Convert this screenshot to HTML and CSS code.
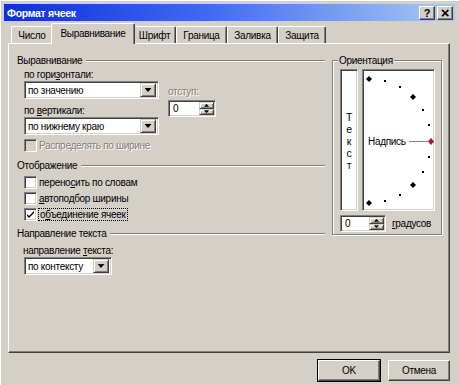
FILE: index.html
```html
<!DOCTYPE html>
<html lang="ru">
<head>
  <meta charset="UTF-8">
  <meta name="viewport" content="width=device-width, initial-scale=1.0">
  <title>Формат ячеек</title>
  <link rel="stylesheet" href="styles.css">
</head>
<body>
  <div class="window">
    <div class="titlebar">
      <span class="title">Формат ячеек</span>
      <div class="caption-btns">
        <span class="cbtn">?</span>
        <span class="cbtn close">×</span>
      </div>
    </div>

    <div class="tabs">
      <div class="tab t-num">Число</div>
      <div class="tab active">Выравнивание</div>
      <div class="tab t-font">Шрифт</div>
      <div class="tab t-border">Граница</div>
      <div class="tab t-fill">Заливка</div>
      <div class="tab t-prot">Защита</div>
    </div>

    <div class="panel">
      <div class="left">
        <div class="group-title">Выравнивание</div>
        <div class="align-row">
          <div class="align-col">
            <div class="lbl">по гори<u>з</u>онтали:</div>
            <div class="combo wide"><span class="val">по значению</span><span class="drop"></span></div>
            <div class="lbl gap">по <u>в</u>ертикали:</div>
            <div class="combo wide"><span class="val">по нижнему краю</span><span class="drop"></span></div>
          </div>
          <div class="indent-col">
            <div class="lbl disabled">отступ:</div>
            <div class="spin indent"><span class="val">0</span><span class="spin-btns"><span class="up"></span><span class="down"></span></span></div>
          </div>
        </div>
        <div class="check disabled first"><span class="box"></span><span>Распределять по ширине</span></div>

        <div class="group-title g2">Отображение</div>
        <div class="checks">
          <div class="check"><span class="box"></span><span>перено<u>с</u>ить по словам</span></div>
          <div class="check"><span class="box"></span><span><u>а</u>втоподбор ширины</span></div>
          <div class="check"><span class="box checked"></span><span class="focus">о<u>б</u>ъединение ячеек</span></div>
        </div>

        <div class="group-title g3">Направление текста</div>
        <div class="lbl dir">направление <u>т</u>екста:</div>
        <div class="combo narrow"><span class="val">по контексту</span><span class="drop"></span></div>
      </div>

      <fieldset class="orient">
        <legend>Ориентация</legend>
        <div class="orient-boxes">
          <div class="vtext"><span>Т</span><span>е</span><span>к</span><span>с</span><span>т</span></div>
          <div class="dial">
            <svg width="69" height="138" viewBox="0 0 69 138">
              <g fill="#000">
                <path d="M4 4l3 3-3 3-3-3z"/>
                <rect x="19" y="8" width="2" height="2"/>
                <rect x="34" y="14" width="2" height="2"/>
                <path d="M48 22l3 3-3 3-3-3z"/>
                <rect x="57" y="37" width="2" height="2"/>
                <rect x="63" y="52" width="2" height="2"/>
                <rect x="63" y="84" width="2" height="2"/>
                <rect x="57" y="99" width="2" height="2"/>
                <path d="M48 110l3 3-3 3-3-3z"/>
                <rect x="34" y="122" width="2" height="2"/>
                <rect x="19" y="128" width="2" height="2"/>
                <path d="M4 128l3 3-3 3-3-3z"/>
              </g>
              <line x1="44" y1="69.5" x2="63" y2="69.5" stroke="#808080" stroke-width="1"/>
              <path d="M66 66l3 3.5-3 3.5-3-3.5z" fill="#b0103a"/>
              <text x="3" y="73" class="dial-text">Надпись</text>
            </svg>
          </div>
        </div>
        <div class="deg-row">
          <div class="spin deg"><span class="val">0</span><span class="spin-btns"><span class="up"></span><span class="down"></span></span></div>
          <span class="deg-lbl"><u>г</u>радусов</span>
        </div>
      </fieldset>
    </div>

    <div class="buttons">
      <div class="btn default">OK</div>
      <div class="btn">Отмена</div>
    </div>
  </div>
</body>
</html>
```

FILE: styles.css
```css
* {
  box-sizing: border-box;
}
body {
  margin: 0;
  width: 459px;
  height: 385px;
  overflow: hidden;
  background: #d4d0c8;
  font: 10px "Liberation Sans", Arial, sans-serif;
  letter-spacing: -0.3px;
  color: #000;
}
u {
  text-decoration: underline;
  text-underline-offset: 1px;
}

.window {
  height: 385px;
  padding: 4px 4px 0 4px;
  background: #d4d0c8;
  box-shadow: inset 1px 1px #fff;
}

/* title bar */
.titlebar {
  height: 17px;
  display: flex;
  align-items: center;
  justify-content: space-between;
  padding: 0 2px 0 3px;
  background: linear-gradient(to right, #0c2fd8, #3f6af0 45%, #a9cbf2);
  color: #fff;
  font-size: 10.5px;
  font-weight: bold;
}
.caption-btns {
  display: flex;
  gap: 2px;
}
.cbtn {
  width: 16px;
  height: 14px;
  display: flex;
  align-items: center;
  justify-content: center;
  background: #d4d0c8;
  color: #000;
  font: bold 11px "Liberation Sans", Arial, sans-serif;
  border: 1px solid;
  border-color: #fff #404040 #404040 #fff;
  box-shadow: inset -1px -1px #808080;
}
.cbtn.close {
  font-size: 15px;
  line-height: 12px;
}

/* tabs */
.tabs {
  display: flex;
  align-items: flex-end;
  height: 22px;
  padding-left: 7px;
  position: relative;
  z-index: 1;
}
.tab {
  height: 17px;
  display: flex;
  align-items: center;
  justify-content: center;
  border-left: 1px solid #fff;
  border-top: 1px solid #fff;
  border-right: 1px solid #404040;
  border-radius: 2px 2px 0 0;
  box-shadow: inset -1px 0 #808080;
  background: #d4d0c8;
}
.t-num { width: 42px; }
.t-font { width: 43px; }
.t-border { width: 51px; }
.t-fill { width: 51px; }
.t-prot { width: 48px; }
.tab.active {
  width: 84px;
  height: 21px;
  margin: 0 -2px -1px;
  padding-bottom: 2px;
  position: relative;
}

/* panel */
.panel {
  height: 310px;
  margin: 0 5px 0 4px;
  display: grid;
  grid-template-columns: 308px 110px;
  column-gap: 7px;
  align-items: start;
  padding: 10px 0 0 8px;
  border: 1px solid;
  border-color: #fff #404040 #404040 #fff;
  box-shadow: inset -1px -1px #808080;
}

.group-title {
  display: flex;
  align-items: center;
  gap: 4px;
  height: 13px;
}
.group-title::after {
  content: "";
  flex: 1;
  border-top: 1px solid #808080;
  border-bottom: 1px solid #fff;
}
.g2 { margin-top: 6px; }
.g3 { margin-top: 5px; }

.lbl {
  height: 12px;
  line-height: 12px;
  white-space: nowrap;
}
.disabled {
  color: #808080;
  text-shadow: 1px 1px #fff;
}

.align-row {
  display: flex;
  gap: 9px;
  padding-left: 7px;
  margin-top: 2px;
}
.align-col .gap {
  margin-top: 6px;
}
.indent-col {
  padding-top: 17px;
}
.indent-col .spin {
  margin-top: 2px;
}

/* combo boxes */
.combo {
  height: 18px;
  display: flex;
  align-items: center;
  justify-content: space-between;
  white-space: nowrap;
  background: #fff;
  border: 1px solid;
  border-color: #808080 #fff #fff #808080;
  box-shadow: inset 1px 1px #404040, inset -1px -1px #d4d0c8;
  padding: 2px 2px 2px 3px;
}
.combo.wide { width: 135px; }
.combo.narrow { width: 88px; margin-left: 7px; }
.drop {
  width: 16px;
  height: 14px;
  flex: none;
  display: flex;
  align-items: center;
  justify-content: center;
  background: #d4d0c8;
  border: 1px solid;
  border-color: #d4d0c8 #404040 #404040 #d4d0c8;
  box-shadow: inset 1px 1px #fff, inset -1px -1px #808080;
}
.drop::after {
  content: "";
  width: 7px;
  height: 4px;
  background: #000;
  clip-path: polygon(0 0, 100% 0, 50% 100%);
}

/* spinners */
.spin {
  height: 17px;
  display: flex;
  align-items: center;
  justify-content: space-between;
  background: #fff;
  border: 1px solid;
  border-color: #808080 #fff #fff #808080;
  box-shadow: inset 1px 1px #404040, inset -1px -1px #d4d0c8;
  padding: 1px 1px 1px 4px;
}
.spin.indent { width: 48px; }
.spin.deg { width: 46px; }
.spin-btns {
  display: flex;
  flex-direction: column;
  width: 15px;
  height: 13px;
}
.spin-btns span {
  flex: 1;
  display: flex;
  align-items: center;
  justify-content: center;
  background: #d4d0c8;
  border: 1px solid;
  border-color: #d4d0c8 #404040 #404040 #d4d0c8;
  box-shadow: inset 1px 1px #fff, inset -1px -1px #808080;
}
.spin-btns span::after {
  content: "";
  width: 5px;
  height: 3px;
  background: #000;
}
.spin-btns .up::after {
  clip-path: polygon(50% 0, 100% 100%, 0 100%);
}
.spin-btns .down::after {
  clip-path: polygon(0 0, 100% 0, 50% 100%);
}

/* checkboxes */
.check {
  display: flex;
  align-items: center;
  gap: 2px;
  height: 15px;
  padding-left: 7px;
  white-space: nowrap;
}
.check.first {
  margin-top: 3px;
}
.checks {
  display: flex;
  flex-direction: column;
  gap: 1px;
  margin-top: 3px;
}
.box {
  width: 13px;
  height: 13px;
  flex: none;
  background: #fff;
  border: 1px solid;
  border-color: #808080 #fff #fff #808080;
  box-shadow: inset 1px 1px #404040, inset -1px -1px #d4d0c8;
  position: relative;
}
.check.disabled .box {
  background: #d4d0c8;
}
.box.checked::after {
  content: "";
  position: absolute;
  left: 2px;
  top: 2px;
  width: 7px;
  height: 7px;
  background: #000;
  clip-path: polygon(0 43%, 0 71%, 29% 100%, 100% 29%, 100% 0, 29% 71%);
}
.focus {
  outline: 1px dotted #000;
  outline-offset: 0;
  padding: 0 1px;
}

.dir {
  margin-top: 4px;
  padding-left: 6px;
  height: 13px;
  line-height: 13px;
}

/* orientation */
.orient {
  margin: 0;
  min-width: 0;
  height: 181px;
  padding: 2px 6px 0 7px;
  border: 1px solid #808080;
  box-shadow: inset 1px 1px #fff, 1px 1px #fff;
}
.orient legend {
  padding: 0 1px;
  margin-left: -2px;
  line-height: 13px;
  background: #d4d0c8;
}
.orient-boxes {
  display: flex;
  gap: 4px;
}
.vtext,
.dial {
  height: 142px;
  background: #fff;
  border: 1px solid;
  border-color: #808080 #fff #fff #808080;
  box-shadow: inset 1px 1px #404040, inset -1px -1px #d4d0c8;
}
.vtext {
  width: 18px;
  display: flex;
  flex-direction: column;
  align-items: center;
  justify-content: center;
  font-size: 10.5px;
  line-height: 12px;
  padding-top: 2px;
}
.dial {
  width: 73px;
  padding: 2px;
}
.dial svg {
  display: block;
}
.dial-text {
  font: 10px "Liberation Sans", Arial, sans-serif;
  letter-spacing: -0.3px;
  fill: #000;
}
.deg-row {
  display: flex;
  align-items: center;
  gap: 6px;
  margin-top: 4px;
}

/* bottom buttons */
.buttons {
  display: flex;
  justify-content: flex-end;
  gap: 8px;
  padding: 7px 5px 0 0;
}
.btn {
  width: 62px;
  height: 21px;
  display: flex;
  align-items: center;
  justify-content: center;
  border: 1px solid;
  border-color: #fff #404040 #404040 #fff;
  box-shadow: inset -1px -1px #808080;
}
.btn.default {
  outline: 1px solid #000;
  outline-offset: 0;
}
```
